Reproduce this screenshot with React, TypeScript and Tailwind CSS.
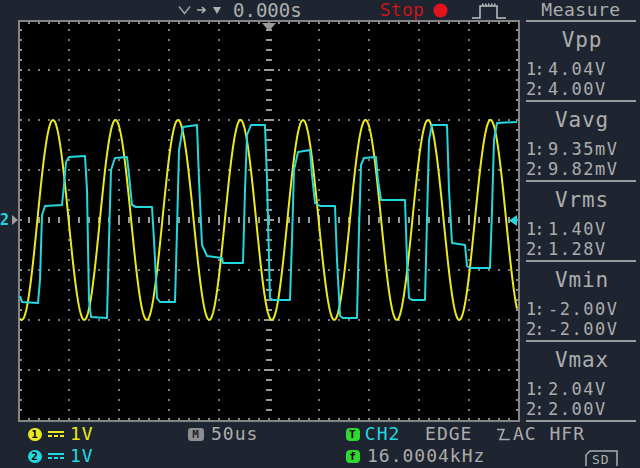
import React from "react";

const mono = "font-['DejaVu_Sans_Mono',monospace]";

// screen coordinates of the traces, read off the capture
const cyanTrace: [number, number][] = [
  [20, 296], [22, 302], [38, 303], [40, 280], [42, 215], [45, 206], [62, 205], [64, 185], [66, 162], [69, 157],
  [85, 156], [87, 190], [89, 300], [91, 317], [107, 318], [109, 240], [111, 170], [115, 158], [127, 157], [129, 175],
  [132, 205], [136, 207], [152, 207], [154, 240], [157, 298], [160, 302], [175, 302], [177, 230], [179, 150], [183, 127],
  [197, 125], [199, 180], [202, 245], [207, 256], [222, 258], [223, 263], [243, 263], [245, 190], [247, 135], [251, 125],
  [265, 125], [267, 180], [270, 298], [273, 300], [290, 300], [292, 240], [294, 170], [298, 152], [310, 150], [312, 175],
  [315, 203], [320, 206], [335, 206], [337, 260], [340, 316], [343, 318], [357, 318], [359, 230], [361, 165], [364, 158],
  [376, 157], [378, 180], [381, 200], [405, 200], [407, 260], [409, 298], [412, 300], [425, 300], [427, 220], [429, 140],
  [432, 125], [447, 125], [449, 190], [452, 243], [465, 245], [467, 266], [470, 268], [490, 268], [492, 210], [494, 140],
  [497, 123], [517, 122],
];

function yellowTrace() {
  const pts: string[] = [];
  for (let x = 20; x <= 517; x++) {
    const y = 220 - 100 * Math.cos((2 * Math.PI * (x - 53)) / 62.5);
    pts.push(`${x},${y.toFixed(1)}`);
  }
  return pts.join(" ");
}

function Graticule() {
  const dots: React.ReactNode[] = [];
  // vertical grid lines
  for (let k = 0; k < 9; k++) {
    const x = 69 + k * 50;
    if (x === 269) continue;
    for (let y = 30; y <= 410; y += 10) {
      dots.push(<rect key={`v${k}-${y}`} x={x - 1} y={y - 1} width={2} height={2} fill="#7c7c7c" />);
    }
  }
  // horizontal grid lines
  for (let k = 0; k < 7; k++) {
    const y = 70 + k * 50;
    if (y === 220) continue;
    for (let x = 29; x <= 509; x += 10) {
      dots.push(<rect key={`h${k}-${x}`} x={x - 1} y={y - 1} width={2} height={2} fill="#7c7c7c" />);
    }
  }
  // centre axes with ticks
  for (let y = 30; y <= 410; y += 10) {
    const wide = (y - 20) % 50 === 0;
    dots.push(<rect key={`cy${y}`} x={wide ? 264 : 266} y={y - 1} width={wide ? 10 : 6} height={2} fill="#9a9a9a" />);
  }
  for (let x = 29; x <= 509; x += 10) {
    const tall = (x - 19) % 50 === 0;
    dots.push(<rect key={`cx${x}`} x={x - 1} y={tall ? 215 : 217} width={2} height={tall ? 10 : 6} fill="#9a9a9a" />);
  }
  // edge ticks
  for (let x = 29; x <= 509; x += 10) {
    dots.push(<rect key={`te${x}`} x={x - 1} y={22} width={2} height={2} fill="#8a8a8a" />);
    dots.push(<rect key={`be${x}`} x={x - 1} y={418} width={2} height={2} fill="#8a8a8a" />);
  }
  for (let y = 30; y <= 410; y += 10) {
    dots.push(<rect key={`le${y}`} x={20} y={y - 1} width={2} height={2} fill="#8a8a8a" />);
    dots.push(<rect key={`re${y}`} x={516} y={y - 1} width={2} height={2} fill="#8a8a8a" />);
  }

  return (
    <svg width={502} height={402} viewBox="18 20 502 402" className="block">
      <rect x={18} y={20} width={502} height={402} fill="#000" />
      {dots}
      {/* frame */}
      <rect x={18} y={20} width={502} height={2} fill="#858585" />
      <rect x={18} y={420} width={502} height={2} fill="#858585" />
      <rect x={18} y={20} width={2} height={402} fill="#858585" />
      <rect x={518} y={20} width={2} height={402} fill="#858585" />
      {/* trigger position */}
      <polygon points="262,23 276,23 269,31" fill="#9a9a9a" />
      <polyline points={yellowTrace()} fill="none" stroke="#eaea1c" strokeWidth={2} />
      <polyline
        points={cyanTrace.map(([x, y]) => `${x},${y}`).join(" ")}
        fill="none"
        stroke="#22d8e0"
        strokeWidth={2}
        strokeLinejoin="round"
      />
      {/* trigger level */}
      <polygon points="517,215 517,226 509,220.5" fill="#22d8e0" />
    </svg>
  );
}

function MeasureBlock({ title, a, b }: { title: string; a: string; b: string }) {
  return (
    <div className="h-[80px] flex flex-col">
      <div className="text-[21px] leading-[24px] tracking-[0.8px] text-center pt-[6px] pl-[2px]">{title}</div>
      <div className="mt-[7px] text-[17px] leading-[20px] flex">
        <span className="w-[22px] tracking-[-2px]">1:</span>
        <span className="tracking-[1.5px]">{a}</span>
      </div>
      <div className="text-[17px] leading-[20px] flex">
        <span className="w-[22px] tracking-[-2px]">2:</span>
        <span className="tracking-[1.5px]">{b}</span>
      </div>
      <div className="mt-auto h-[2px] bg-[#9a9a9a]" />
    </div>
  );
}

function Badge({ bg, children }: { bg: string; children: React.ReactNode }) {
  return (
    <span
      className={`inline-flex items-center justify-center w-[14px] h-[13px] rounded-[4px] text-[11px] font-bold leading-none text-black ${bg}`}
    >
      {children}
    </span>
  );
}

function DcSymbol({ color }: { color: string }) {
  return (
    <svg width={16} height={8} viewBox="0 0 16 8" className="block">
      <rect x={0} y={1} width={16} height={2} fill={color} />
      <rect x={0} y={5} width={4} height={2} fill={color} />
      <rect x={6} y={5} width={4} height={2} fill={color} />
      <rect x={12} y={5} width={4} height={2} fill={color} />
    </svg>
  );
}

export default function App() {
  return (
    <div className={`w-[640px] h-[468px] bg-[#1e2530] text-[#acacac] overflow-hidden flex flex-col ${mono}`}>
      <div className="flex h-[422px]">
        <div className="w-[520px] flex flex-col">
          {/* top status bar */}
          <div className="h-[20px] flex items-center pl-[178px]">
            <svg width={13} height={10} viewBox="0 0 13 10" className="block">
              <path d="M1 1.5 L6.5 8.5 L12 1.5" fill="none" stroke="#a0a0a0" strokeWidth={1.5} />
            </svg>
            <svg width={9} height={8} viewBox="0 0 9 8" className="block ml-[6px]">
              <path d="M0 4 H8 M5 1 L8 4 L5 7" fill="none" stroke="#b0b0b0" strokeWidth={1.6} />
            </svg>
            <svg width={8} height={7} viewBox="0 0 8 7" className="block ml-[7px]">
              <polygon points="0,0 8,0 4,7" fill="#b0b0b0" />
            </svg>
            <span className="ml-[12px] text-[19px] leading-[20px]">0.000s</span>
            <span className="ml-[78px] text-[18px] leading-[20px] tracking-[0.3px] text-[#c8141a]">Stop</span>
            <svg width={15} height={15} viewBox="0 0 15 15" className="block ml-[9px]">
              <circle cx={7.5} cy={7.5} r={7} fill="#e0141a" />
            </svg>
            <svg width={34} height={16} viewBox="0 0 34 16" className="block ml-[24px] mt-[2px]">
              <path d="M0 15 H8 V3 H25 V15 H34" fill="none" stroke="#c0c0c0" strokeWidth={1.5} />
              {[10, 13, 16, 19, 22].map((x) => (
                <rect key={x} x={x} y={0.5} width={1.5} height={2} fill="#c0c0c0" />
              ))}
            </svg>
          </div>
          <div className="flex">
            {/* channel 2 reference marker */}
            <div className="w-[18px] pt-[193px]">
              <div className="flex items-center h-[14px]">
                <span className="text-[15px] font-bold leading-none text-[#22d8e0]">2</span>
                <svg width={6} height={10} viewBox="0 0 6 10" className="block ml-[3px]">
                  <polygon points="0,0 6,5 0,10" fill="#a0a0a0" />
                </svg>
              </div>
            </div>
            <Graticule />
          </div>
        </div>

        {/* measure panel */}
        <div className="w-[120px] flex flex-col pl-[6px] pr-[4px]">
          <div className="h-[20px] text-[18px] leading-[20px] tracking-[0.5px] text-center">Measure</div>
          <div className="h-[2px] bg-[#9a9a9a]" />
          <MeasureBlock title="Vpp" a="4.04V" b="4.00V" />
          <MeasureBlock title="Vavg" a="9.35mV" b="9.82mV" />
          <MeasureBlock title="Vrms" a="1.40V" b="1.28V" />
          <MeasureBlock title="Vmin" a="-2.00V" b="-2.00V" />
          <MeasureBlock title="Vmax" a="2.04V" b="2.00V" />
        </div>
      </div>

      {/* bottom status bar */}
      <div className="flex pt-[1px] text-[18px] leading-[22px] tracking-[1px]">
        <div className="w-[188px] pl-[28px] flex flex-col">
          <div className="h-[22px] flex items-center text-[#eaea1c]">
            <Badge bg="bg-[#eaea1c] rounded-full">1</Badge>
            <span className="ml-[6px]">
              <DcSymbol color="#eaea1c" />
            </span>
            <span className="ml-[6px]">1V</span>
          </div>
          <div className="h-[22px] flex items-center text-[#22d8e0]">
            <Badge bg="bg-[#22d8e0] rounded-full">2</Badge>
            <span className="ml-[6px]">
              <DcSymbol color="#22d8e0" />
            </span>
            <span className="ml-[6px]">1V</span>
          </div>
        </div>
        <div className="w-[158px] flex flex-col">
          <div className="h-[22px] flex items-center">
            <span className="inline-flex items-center justify-center w-[16px] h-[13px] rounded-[3px] bg-[#8e8e8e] text-[11px] font-bold leading-none text-[#1e2530]">
              M
            </span>
            <span className="ml-[7px]">50us</span>
          </div>
        </div>
        <div className="w-[239px] flex flex-col">
          <div className="h-[22px] flex items-center">
            <Badge bg="bg-[#2ed82e]">T</Badge>
            <span className="ml-[5px] w-[61px] text-[#22d8e0]">CH2</span>
            <span className="w-[72px]">EDGE</span>
            <svg width={15} height={13} viewBox="0 0 15 13" className="block">
              <path d="M1 1.5 H8 L4 11.5 H14" fill="none" stroke="#acacac" strokeWidth={1.6} />
            </svg>
            <span className="ml-[2px] w-[37px]">AC</span>
            <span>HFR</span>
          </div>
          <div className="h-[22px] flex items-center">
            <Badge bg="bg-[#2ed82e]">f</Badge>
            <span className="ml-[7px]">16.0004kHz</span>
          </div>
        </div>
        <div className="flex flex-col">
          <div className="h-[22px]" />
          <div className="h-[22px] flex items-end">
            <svg width={33} height={17} viewBox="0 0 33 17" className="block">
              <path d="M1 16 V5 L5 1 H32 V16" fill="none" stroke="#acacac" strokeWidth={1.5} />
              <text x={7} y={14} fontSize={13} fill="#acacac" fontFamily="DejaVu Sans Mono">
                SD
              </text>
            </svg>
          </div>
        </div>
      </div>
    </div>
  );
}
